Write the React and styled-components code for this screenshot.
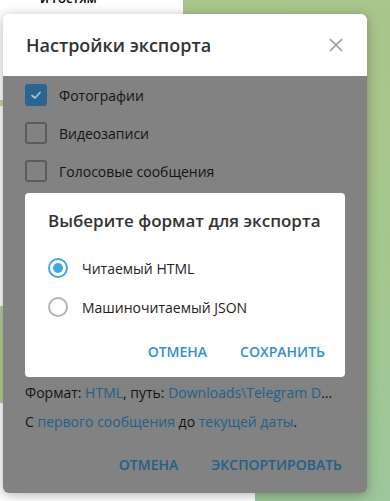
import React from 'react';
import styled, { createGlobalStyle } from 'styled-components';

const GlobalStyle = createGlobalStyle`
  html, body {
    margin: 0;
    padding: 0;
  }
  body {
    font-family: 'Open Sans', 'Noto Sans', sans-serif;
    overflow: hidden;
  }
`;

const Window = styled.div`
  position: relative;
  width: 390px;
  height: 501px;
  display: flex;
  overflow: hidden;
`;

const ChatList = styled.div`
  width: 183px;
  background: #fff;
  display: flex;
  flex-direction: column;
`;

const ChatRow = styled.div`
  height: ${p => p.h || 48}px;
  font-size: 13px;
  color: #000;
  font-weight: ${p => (p.bold ? 600 : 400)};
  background: ${p => p.bg || 'transparent'};
  line-height: 14px;
  white-space: nowrap;
  overflow: hidden;
  padding-left: ${p => p.indent || 0}px;
`;

const ChatName = styled.span`
  display: block;
  margin-top: -9px;
`;

const Wallpaper = styled.div`
  flex: 1;
  background: linear-gradient(170deg, #a9c68b 0%, #a5c78f 55%, #9dc69c 100%);
  display: flex;
  flex-direction: column;
  justify-content: flex-end;
`;

const Bubble = styled.div`
  width: 72px;
  height: 30px;
  background: #fff;
  display: flex;
  align-items: flex-end;
  justify-content: flex-end;
  padding: 0 10px 8px 0;
  box-sizing: border-box;
  font-size: 11px;
  color: #a0a0a0;
`;

const Dialog = styled.div`
  position: absolute;
  left: 3px;
  top: 14px;
  width: 364px;
  height: 479px;
  border-radius: 6px;
  overflow: hidden;
  box-shadow: 0 2px 12px rgba(0, 0, 0, 0.3);
  display: flex;
  flex-direction: column;
`;

const Header = styled.div`
  height: 62px;
  background: #fff;
  display: flex;
  align-items: center;
  justify-content: space-between;
  padding: 0 19px 0 23px;
  flex-shrink: 0;
`;

const Title = styled.div`
  font-size: ${p => p.size || 18}px;
  font-weight: 600;
  color: #333;
  line-height: 24px;
`;

const CloseButton = styled.button`
  border: none;
  background: none;
  padding: 0;
  width: 24px;
  height: 24px;
  display: flex;
  align-items: center;
  justify-content: center;
`;

const Body = styled.div`
  position: relative;
  flex: 1;
  background: #828282;
  padding: 8px 24px 0 22px;
  display: flex;
  flex-direction: column;
`;

const CheckList = styled.div`
  display: flex;
  flex-direction: column;
  gap: 16px;
`;

const CheckRow = styled.label`
  display: flex;
  align-items: center;
  gap: 12px;
  height: 22px;
  font-size: 14px;
  color: #141414;
`;

const Box = styled.span`
  width: 22px;
  height: 22px;
  box-sizing: border-box;
  border-radius: 3px;
  border: 2px solid ${p => (p.checked ? '#2a6591' : '#5c5c5c')};
  background: ${p => (p.checked ? '#2a6591' : 'transparent')};
  display: flex;
  align-items: center;
  justify-content: center;
`;

const Info = styled.div`
  margin-top: 201px;
  display: flex;
  flex-direction: column;
  gap: 9px;
`;

const InfoLine = styled.div`
  font-size: 14px;
  line-height: 20px;
  color: #141414;
  white-space: nowrap;
  overflow: hidden;
  text-overflow: ellipsis;
  max-width: 313px;
`;

const Link = styled.span`
  color: #235f8b;
`;

const Actions = styled.div`
  display: flex;
  justify-content: flex-end;
  gap: 13px;
  margin-top: ${p => p.top || 14}px;
  margin-right: ${p => p.right || 0}px;
`;

const TextButton = styled.button`
  border: none;
  background: none;
  height: 36px;
  padding: 0 10px;
  font-family: 'Open Sans', sans-serif;
  font-size: 14px;
  font-weight: 600;
  color: ${p => p.color};
  text-transform: uppercase;
`;

const Layer = styled.div`
  position: absolute;
  left: 22px;
  top: 117px;
  width: 320px;
  height: 184px;
  background: #fff;
  border-radius: 4px;
  box-sizing: border-box;
  padding: 16px 0 0 23px;
  display: flex;
  flex-direction: column;
`;

const RadioList = styled.div`
  margin-top: 23px;
  display: flex;
  flex-direction: column;
  gap: 15px;
`;

const RadioRow = styled.label`
  display: flex;
  align-items: center;
  gap: 14px;
  height: 24px;
  font-size: 14px;
  color: #222;
`;

const Radio = styled.span`
  width: 20px;
  height: 20px;
  box-sizing: border-box;
  border-radius: 50%;
  border: 2px solid ${p => (p.checked ? '#40a7e3' : '#b3b3b3')};
  display: flex;
  align-items: center;
  justify-content: center;

  &::after {
    content: '';
    display: ${p => (p.checked ? 'block' : 'none')};
    width: 10px;
    height: 10px;
    border-radius: 50%;
    background: #40a7e3;
  }
`;

const Check = () => (
  <svg width="14" height="14" viewBox="0 0 14 14">
    <polyline points="3,7.5 6,10 11,4.5" fill="none" stroke="#a9bfd2" strokeWidth="1.8" strokeLinecap="round" strokeLinejoin="round" />
  </svg>
);

const CloseIcon = () => (
  <svg width="14" height="14" viewBox="0 0 14 14">
    <path d="M1 1 L13 13 M13 1 L1 13" stroke="#9a9a9a" strokeWidth="1.6" />
  </svg>
);

const options = [
  { label: 'Фотографии', checked: true },
  { label: 'Видеозаписи', checked: false },
  { label: 'Голосовые сообщения', checked: false },
];

const formats = [
  { label: 'Читаемый HTML', checked: true },
  { label: 'Машиночитаемый JSON', checked: false },
];

export default function App() {
  return (
    <>
      <GlobalStyle />
      <Window>
        <ChatList>
          <ChatRow h={8} bold indent={40}>
            <ChatName>и гостям</ChatName>
          </ChatRow>
          <ChatRow h={92} />
          <ChatRow h={6} bg="#c3d8a8" />
          <ChatRow h={200} />
          <ChatRow h={97} bg="#b7cf99" />
          <ChatRow h={98} />
        </ChatList>
        <Wallpaper>
          <Bubble>11 2 13:33</Bubble>
        </Wallpaper>

        <Dialog>
          <Header>
            <Title>Настройки экспорта</Title>
            <CloseButton>
              <CloseIcon />
            </CloseButton>
          </Header>
          <Body>
            <CheckList>
              {options.map(o => (
                <CheckRow key={o.label}>
                  <Box checked={o.checked}>{o.checked && <Check />}</Box>
                  {o.label}
                </CheckRow>
              ))}
            </CheckList>
            <Info>
              <InfoLine>
                Формат: <Link>HTML</Link>, путь: <Link>Downloads\Telegram Desktop</Link>
              </InfoLine>
              <InfoLine>
                С <Link>первого сообщения</Link> до <Link>текущей даты</Link>.
              </InfoLine>
            </Info>
            <Actions top={14} right={-9}>
              <TextButton color="#235f8b">Отмена</TextButton>
              <TextButton color="#235f8b">Экспортировать</TextButton>
            </Actions>

            <Layer>
              <Title size={17}>Выберите формат для экспорта</Title>
              <RadioList>
                {formats.map(f => (
                  <RadioRow key={f.label}>
                    <Radio checked={f.checked} />
                    {f.label}
                  </RadioRow>
                ))}
              </RadioList>
              <Actions top={14} right={10}>
                <TextButton color="#2f8fd3">Отмена</TextButton>
                <TextButton color="#2f8fd3">Сохранить</TextButton>
              </Actions>
            </Layer>
          </Body>
        </Dialog>
      </Window>
    </>
  );
}
